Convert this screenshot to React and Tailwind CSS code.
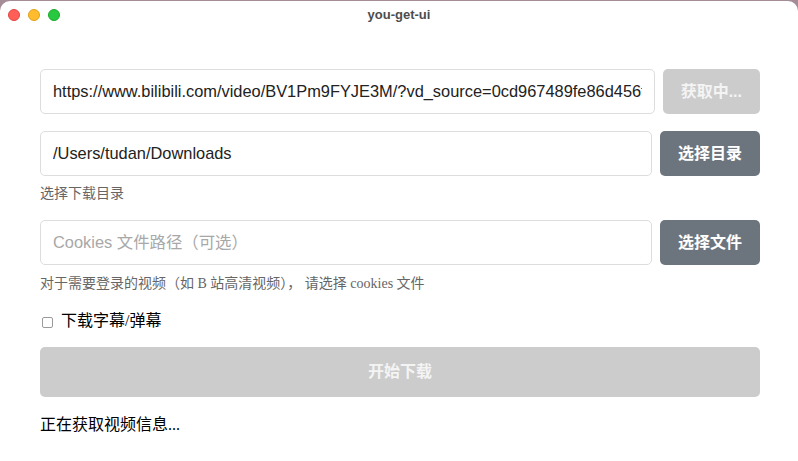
import React from 'react';

const sans = { fontFamily: '"Liberation Sans", "Noto Sans CJK SC", sans-serif' };
const serif = { fontFamily: '"Liberation Serif", "Noto Sans CJK SC", serif' };

const Field = ({ value, placeholder, button, disabled }) => (
  <div className="flex h-[45px] gap-2">
    <input
      readOnly
      value={value}
      placeholder={placeholder}
      style={sans}
      className="min-w-0 flex-1 rounded-[5px] border border-[#dddddd] bg-white px-3 text-[16.4px] text-[#222] placeholder:text-[#a8a8a8] outline-none"
    />
    <button
      type="button"
      style={sans}
      className={
        disabled
          ? 'rounded-[5px] bg-[#cccccc] px-[18px] text-[16px] font-bold text-[#f4f4f4]'
          : 'rounded-[5px] bg-[#6c757d] px-[18px] text-[16px] font-bold text-white'
      }
    >
      {button}
    </button>
  </div>
);

export default function App() {
  return (
    <div className="h-[461px] w-[798px] overflow-hidden bg-[#a58d98] pt-px">
      <div className="flex h-full flex-col rounded-t-[10px] bg-white">
        {/* title bar */}
        <div className="grid h-[27px] shrink-0 grid-cols-[1fr_auto_1fr] items-center px-2">
          <div className="flex items-center gap-2">
            <span className="h-3 w-3 rounded-full border border-[#e2463f] bg-[#ff5f57]" />
            <span className="h-3 w-3 rounded-full border border-[#e1a116] bg-[#febc2e]" />
            <span className="h-3 w-3 rounded-full border border-[#1aab29] bg-[#28c840]" />
          </div>
          <div style={sans} className="text-[13px] font-bold text-[#4d4d4d]">you-get-ui</div>
          <div />
        </div>

        {/* form */}
        <div className="pl-10 pr-[38px] pt-[41px]">
          <Field
            value="https://www.bilibili.com/video/BV1Pm9FYJE3M/?vd_source=0cd967489fe86d456f3b2a1e"
            button="获取中..."
            disabled
          />
          <div className="mt-[17px]">
            <Field value="/Users/tudan/Downloads" button="选择目录" />
          </div>
          <p style={serif} className="mt-2 text-[14px] leading-5 text-[#666]">选择下载目录</p>

          <div className="mt-4">
            <Field value="" placeholder="Cookies 文件路径（可选）" button="选择文件" />
          </div>
          <p style={serif} className="mt-[9px] text-[14px] leading-5 text-[#666]">
            对于需要登录的视频（如 B 站高清视频）， 请选择 cookies 文件
          </p>

          <label style={serif} className="mt-[15px] flex h-6 items-center text-[16px] text-black">
            <span className="ml-[2px] mr-2 mt-[3px] h-[11px] w-[11px] rounded-[2px] border border-[#9a9a9a] bg-white" />
            下载字幕/弹幕
          </label>

          <button
            type="button"
            style={sans}
            className="mt-[14px] h-[50px] w-full rounded-[5px] bg-[#cccccc] text-[16px] font-bold text-[#f4f4f4]"
          >
            开始下载
          </button>

          <p style={serif} className="mt-4 text-[16px] leading-6 text-black">正在获取视频信息...</p>
        </div>
      </div>
    </div>
  );
}
